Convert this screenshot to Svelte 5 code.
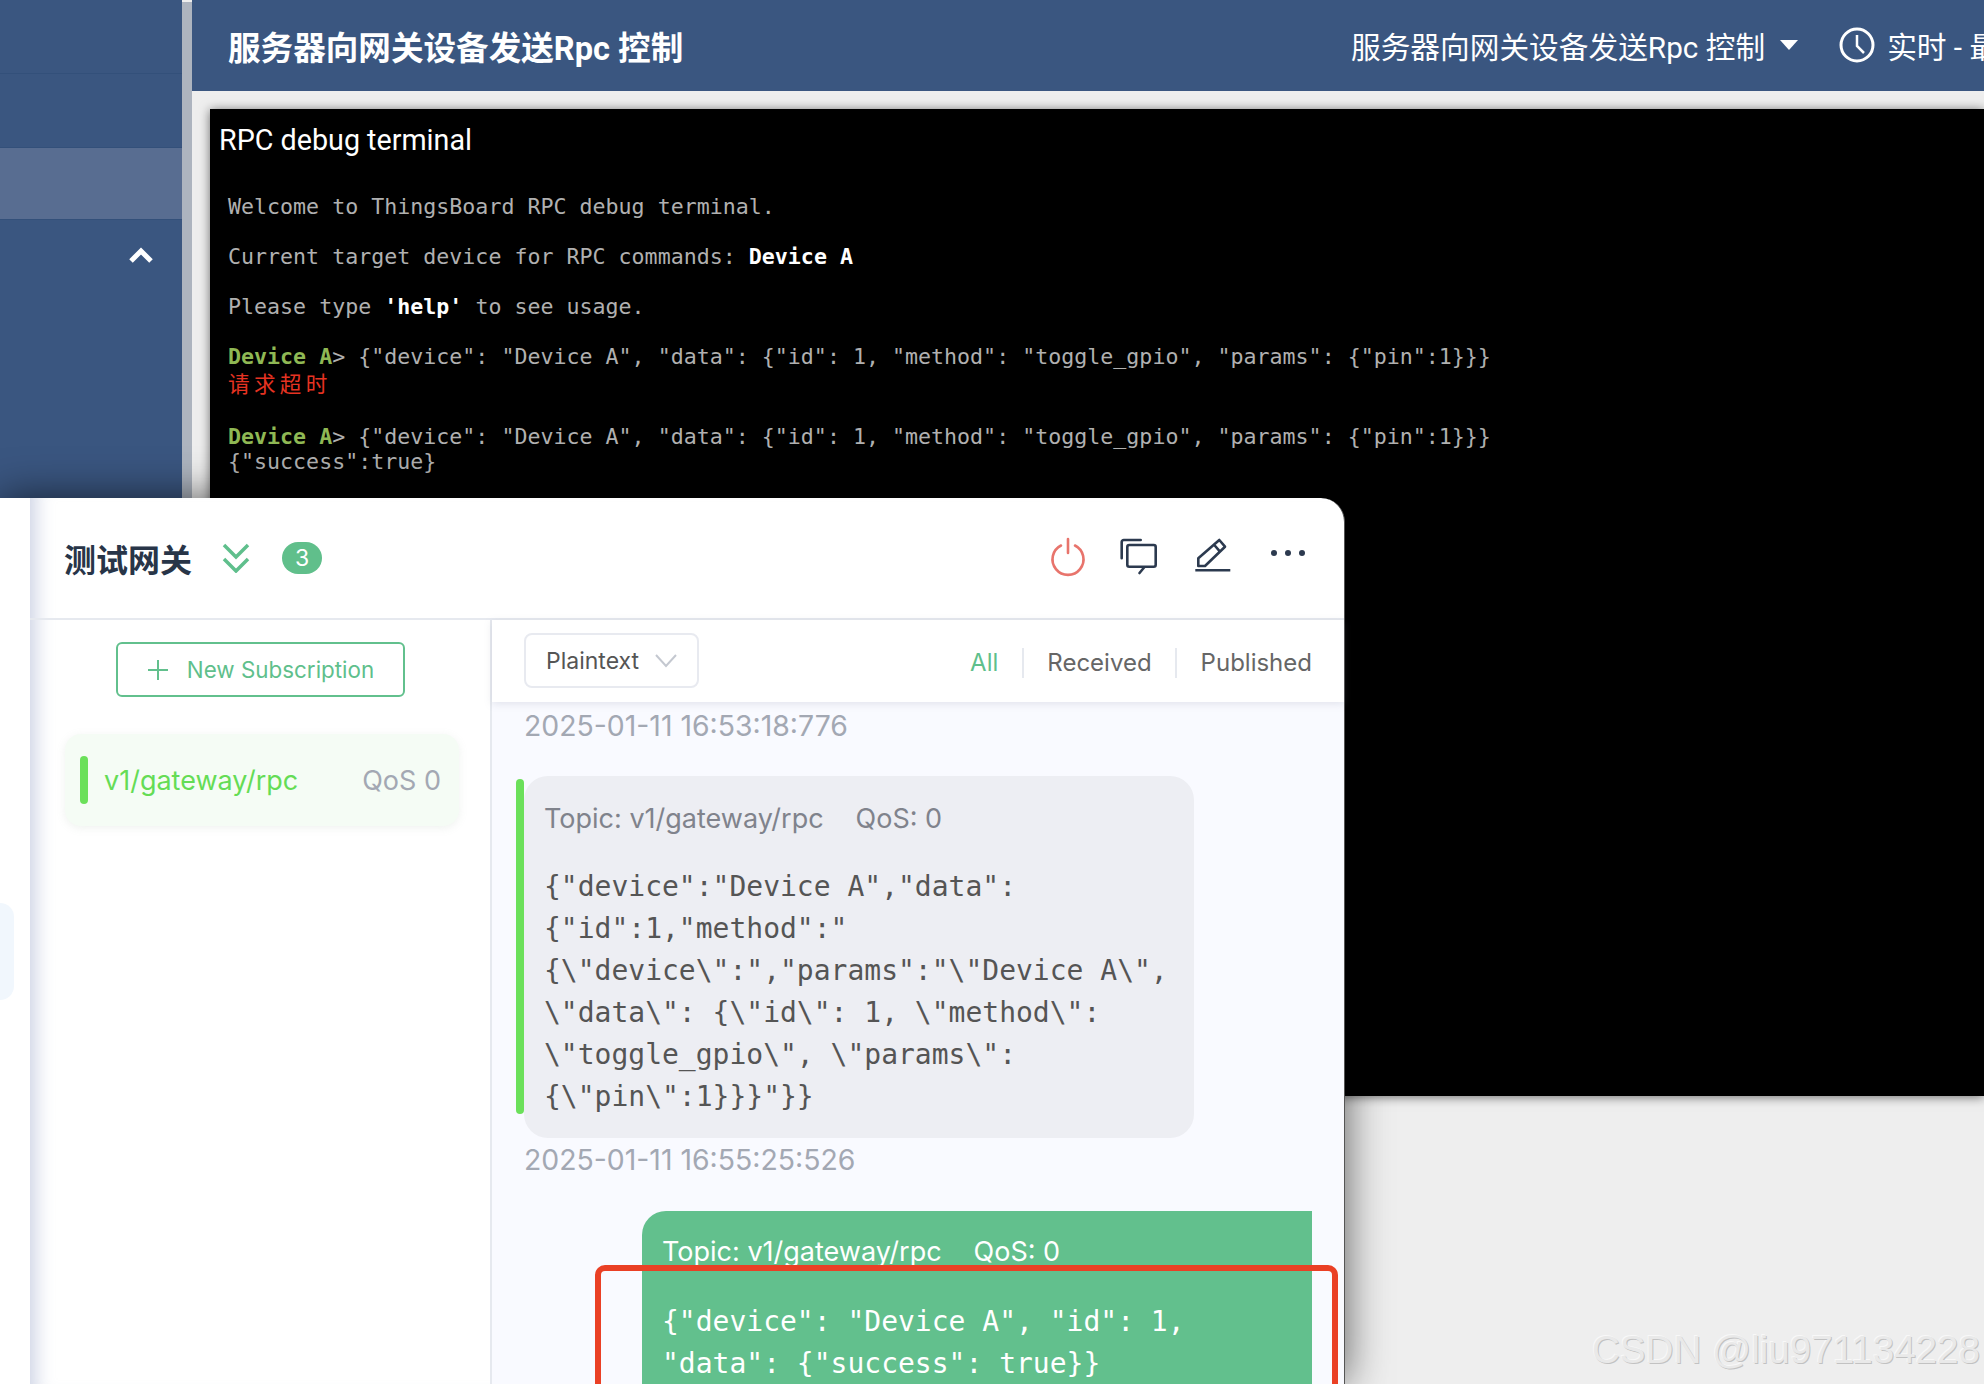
<script lang="ts">
	const terminalIntro = "Welcome to ThingsBoard RPC debug terminal.";
	const command = `{"device": "Device A", "data": {"id": 1, "method": "toggle_gpio", "params": {"pin":1}}}`;

	const received = [
		`{"device":"Device A","data":`,
		`{"id":1,"method":"`,
		`{\\"device\\":","params":"\\"Device A\\",`,
		`\\"data\\": {\\"id\\": 1, \\"method\\":`,
		`\\"toggle_gpio\\", \\"params\\":`,
		`{\\"pin\\":1}}}"}}`,
	];
	const published = [`{"device": "Device A", "id": 1,`, `"data": {"success": true}}`];
	const tabs = ["All", "Received", "Published"];
</script>

<div class="screen">
	<div class="back">
		<aside class="sidebar">
			<div class="nav-row"></div>
			<div class="nav-row"></div>
			<div class="nav-row active"></div>
			<div class="nav-toggle">
				<svg width="26" height="16" viewBox="0 0 26 16">
					<path d="M3 14 L13 4 L23 14" fill="none" stroke="#fff" stroke-width="5" />
				</svg>
			</div>
		</aside>
		<div class="scrollbar"></div>
		<main class="main">
			<header class="topbar">
				<h1>服务器向网关设备发送Rpc 控制</h1>
				<div class="state-select">
					<span>服务器向网关设备发送Rpc 控制</span>
					<i class="caret"></i>
				</div>
				<div class="timewindow">
					<svg width="36" height="36" viewBox="0 0 36 36">
						<circle cx="18" cy="18" r="16" fill="none" stroke="#fff" stroke-width="3" />
						<path d="M18 8 V19 L25 26" fill="none" stroke="#fff" stroke-width="2.5" />
					</svg>
					<span>实时 - 最后</span>
				</div>
			</header>
			<section class="terminal">
				<h2>RPC debug terminal</h2>
				<div class="term-body">
					<p>{terminalIntro}</p>
					<p>Current target device for RPC commands: <b>Device A</b></p>
					<p>Please type <b>'help'</b> to see usage.</p>
					<p class="first-call"><b class="prompt">Device A</b>&gt; {command}<span class="err">请求超时</span></p>
					<p><b class="prompt">Device A</b>&gt; {command}<span class="reply">{`{"success":true}`}</span></p>
				</div>
			</section>
			<div class="below"></div>
		</main>
	</div>

	<div class="client">
		<div class="rail"><div class="rail-tab"></div></div>
		<div class="pane">
			<header class="conn-head">
				<span class="conn-name">测试网关</span>
				<svg class="chev" width="28" height="30" viewBox="0 0 28 30">
					<path d="M2 2 L14 14 L26 2 M2 16 L14 28 L26 16" fill="none" stroke="#5fbf8c" stroke-width="3.5" />
				</svg>
				<span class="badge">3</span>
				<div class="conn-actions">
					<svg width="42" height="42" viewBox="0 0 42 42">
						<path d="M14 9.5 A15.5 15.5 0 1 0 28 9.5 M21 3 V17" fill="none" stroke="#e8746c" stroke-width="2.6" stroke-linecap="round" />
					</svg>
					<svg width="42" height="42" viewBox="0 0 42 42">
						<path d="M21.7 4 H4.7 a2 2 0 0 0 -2 2 V22.3" fill="none" stroke="#2c3a4f" stroke-width="2.6" stroke-linecap="round" />
						<path d="M10.3 9 H34.7 a2 2 0 0 1 2 2 V28.7 a2 2 0 0 1 -2 2 H10.3 a2 2 0 0 1 -2 -2 V11 a2 2 0 0 1 2 -2 Z M25.5 31 L20.5 37" fill="none" stroke="#2c3a4f" stroke-width="2.6" stroke-linecap="round" />
					</svg>
					<svg width="42" height="42" viewBox="0 0 42 42">
						<path d="M7.3 30 V22.3 L28.3 4 L34 10.7 L14 30 Z M23.3 9 L29 15.7" fill="none" stroke="#2c3a4f" stroke-width="2.6" stroke-linejoin="round" />
						<path d="M4.3 34.3 H39.3" fill="none" stroke="#2c3a4f" stroke-width="2.6" />
					</svg>
					<svg class="more" width="42" height="42" viewBox="0 0 42 42">
						<circle cx="7" cy="21" r="3" fill="#2c3a4f" />
						<circle cx="21" cy="21" r="3" fill="#2c3a4f" />
						<circle cx="35" cy="21" r="3" fill="#2c3a4f" />
					</svg>
				</div>
			</header>
			<div class="conn-body">
				<div class="subs">
					<button class="new-sub">
						<svg width="22" height="22" viewBox="0 0 22 22">
							<path d="M11 1 V21 M1 11 H21" fill="none" stroke="#62c08d" stroke-width="2" />
						</svg>
						New Subscription
					</button>
					<div class="sub-item">
						<i class="sub-bar"></i>
						<span class="sub-topic">v1/gateway/rpc</span>
						<span class="sub-qos">QoS 0</span>
					</div>
				</div>
				<div class="msgs">
					<div class="toolbar">
						<div class="format">
							<span>Plaintext</span>
							<svg width="22" height="14" viewBox="0 0 22 14">
								<path d="M1 1 L11 12 L21 1" fill="none" stroke="#c4c8d0" stroke-width="2" />
							</svg>
						</div>
						<div class="tabs">
							{#each tabs as tab, i (tab)}
								<span class:on={i === 0}>{tab}</span>
							{/each}
						</div>
					</div>
					<div class="msg-list">
						<div class="stamp">2025-01-11 16:53:18:776</div>
						<div class="bubble in">
							<div class="meta"><span>Topic: v1/gateway/rpc</span><span>QoS: 0</span></div>
							<div class="code">
								{#each received as line, i (i)}
									<div>{line}</div>
								{/each}
							</div>
						</div>
						<div class="stamp second">2025-01-11 16:55:25:526</div>
						<div class="bubble out">
							<div class="meta"><span>Topic: v1/gateway/rpc</span><span>QoS: 0</span></div>
							<div class="code">
								{#each published as line, i (i)}
									<div>{line}</div>
								{/each}
							</div>
						</div>
					</div>
				</div>
			</div>
		</div>
		<div class="highlight"></div>
	</div>

	<div class="watermark">CSDN @liu971134228</div>
</div>

<style>
	:global(body) {
		margin: 0;
	}

	.screen {
		position: relative;
		width: 1984px;
		height: 1384px;
		overflow: hidden;
		background: #eeeeee;
		font-family: Inter, "Noto Sans CJK SC", sans-serif;
	}

	.back {
		display: flex;
		height: 100%;
	}

	.sidebar {
		width: 182px;
		flex: none;
		background: #3a5680;
	}
	.nav-row {
		height: 73px;
		border-bottom: 1px solid #33507a;
		box-sizing: content-box;
	}
	.nav-row.active {
		background: #586d91;
		height: 71px;
	}
	.nav-toggle {
		display: flex;
		justify-content: flex-end;
		padding: 27px 28px 0 0;
	}

	.scrollbar {
		width: 10px;
		flex: none;
		margin-top: 2px;
		background: #adb4bf;
	}

	.main {
		flex: 1;
		min-width: 0;
		display: flex;
		flex-direction: column;
	}

	.topbar {
		height: 91px;
		flex: none;
		box-sizing: border-box;
		display: flex;
		align-items: center;
		padding: 0 0 1px 36px;
		background: #3a5680;
		color: #fff;
		white-space: nowrap;
		font-family: Roboto, "Noto Sans CJK SC", sans-serif;
		overflow: hidden;
	}
	.topbar h1 {
		margin: 0;
		width: 1123px;
		flex: none;
		font-size: 32.6px;
		font-weight: 700;
	}
	.state-select {
		display: flex;
		align-items: center;
		gap: 15px;
		font-size: 29.7px;
		flex: none;
	}
	.caret {
		border-left: 9px solid transparent;
		border-right: 9px solid transparent;
		border-top: 10px solid #fff;
	}
	.timewindow {
		display: flex;
		align-items: center;
		gap: 12px;
		margin-left: 41px;
		font-size: 29.7px;
		flex: none;
	}

	.terminal {
		margin: 18px 0 0 18px;
		height: 987px;
		flex: none;
		background: #000;
		box-shadow: 0 1px 10px rgba(0, 0, 0, 0.55);
		overflow: hidden;
	}
	.terminal h2 {
		margin: 0;
		padding: 13px 0 0 9px;
		font-family: Roboto, sans-serif;
		font-size: 28.7px;
		font-weight: 400;
		line-height: 36px;
		color: #fff;
	}
	.term-body {
		padding: 36px 0 0 18px;
		font-family: "DejaVu Sans Mono", "Noto Sans CJK SC", monospace;
		font-size: 21.64px;
		line-height: 25px;
		color: #b0b0b0;
	}
	.term-body p {
		margin: 0 0 25px;
		white-space: pre;
	}
	.term-body .first-call {
		margin-bottom: 24px;
	}
	.term-body b {
		color: #fff;
	}
	.term-body .prompt {
		color: #8fb854;
	}
	.err {
		display: block;
		line-height: 31px;
		color: #e63322;
		letter-spacing: 4.3px;
	}
	.reply {
		display: block;
	}

	.client {
		position: absolute;
		left: 0;
		top: 498px;
		width: 1344px;
		height: 886px;
		display: flex;
		background: #fff;
		border-top-right-radius: 24px;
		border-right: 1px solid #555;
		box-shadow: 0 0 44px rgba(0, 0, 0, 0.62);
	}

	.rail {
		width: 30px;
		flex: none;
		position: relative;
		background: #fff;
	}
	.rail-tab {
		position: absolute;
		left: 0;
		top: 405px;
		width: 14px;
		height: 97px;
		background: #f1f7fd;
		border-radius: 0 14px 14px 0;
	}

	.pane {
		flex: 1;
		min-width: 0;
		display: flex;
		flex-direction: column;
		box-shadow: inset 22px 0 18px -16px rgba(190, 198, 220, 0.75);
		border-top-right-radius: 24px;
	}

	.conn-head {
		height: 122px;
		flex: none;
		box-sizing: border-box;
		border-bottom: 2px solid #e6e9ef;
		display: flex;
		align-items: center;
		padding-left: 34px;
	}
	.conn-name {
		font-family: "Noto Sans CJK SC", sans-serif;
		font-size: 32px;
		font-weight: 700;
		color: #283548;
	}
	.chev {
		margin-left: 30px;
	}
	.badge {
		margin-left: 32px;
		width: 40px;
		height: 32px;
		border-radius: 16px;
		background: #60bf8b;
		color: #fff;
		font-size: 23px;
		text-align: center;
		line-height: 32px;
	}
	.conn-actions {
		margin-left: auto;
		margin-right: 35px;
		display: flex;
		gap: 30px;
		transform: translateY(-1px);
	}
	.more {
		margin-left: 4px;
		transform: translateY(-4px);
	}

	.conn-body {
		flex: 1;
		min-height: 0;
		display: flex;
	}

	.subs {
		width: 462px;
		flex: none;
		box-sizing: border-box;
		border-right: 2px solid #e6e9ef;
		padding: 22px 0 0 35px;
	}
	.new-sub {
		display: flex;
		align-items: center;
		justify-content: center;
		gap: 18px;
		margin-left: 51px;
		width: 289px;
		height: 55px;
		box-sizing: border-box;
		padding: 0;
		background: #fff;
		border: 2px solid #62c08d;
		border-radius: 6px;
		color: #5fbf8c;
		font-family: inherit;
		font-size: 22.4px;
	}
	.sub-item {
		margin-top: 37px;
		width: 394px;
		height: 92px;
		box-sizing: border-box;
		padding: 0 18px 0 15px;
		display: flex;
		align-items: center;
		border-radius: 16px;
		background: #f5fcf5;
		box-shadow: 0 2px 8px rgba(150, 170, 150, 0.15);
		font-size: 27px;
	}
	.sub-bar {
		width: 8px;
		height: 48px;
		border-radius: 4px;
		background: #6be05a;
	}
	.sub-topic {
		margin-left: 16px;
		color: #65dc55;
	}
	.sub-qos {
		margin-left: auto;
		color: #a3a8b3;
	}

	.msgs {
		flex: 1;
		min-width: 0;
		display: flex;
		flex-direction: column;
		background: #f9faff;
	}
	.toolbar {
		height: 82px;
		flex: none;
		box-sizing: border-box;
		display: flex;
		align-items: flex-start;
		background: #fff;
		box-shadow: 0 2px 8px rgba(120, 130, 150, 0.18);
		position: relative;
		padding: 13px 32px 0;
	}
	.format {
		width: 175px;
		height: 55px;
		box-sizing: border-box;
		display: flex;
		align-items: center;
		gap: 16px;
		padding-left: 20px;
		border: 2px solid #e8eaf0;
		border-radius: 8px;
		font-size: 23px;
		color: #555;
	}
	.tabs {
		margin-left: auto;
		margin-top: 15px;
		display: flex;
		align-items: center;
		font-size: 24px;
		line-height: 30px;
		color: #666;
	}
	.tabs span {
		padding: 0 23.5px;
		border-left: 2px solid #e6e9ef;
	}
	.tabs span:first-child {
		border-left: 0;
	}
	.tabs span:last-child {
		padding-right: 0;
	}
	.tabs .on {
		color: #5fbf8c;
	}

	.msg-list {
		flex: 1;
		min-height: 0;
		display: flex;
		flex-direction: column;
		align-items: flex-start;
		padding: 7px 32px 0;
		overflow: hidden;
	}
	.stamp {
		font-size: 28.4px;
		line-height: 34px;
		color: #a3a8b3;
	}
	.stamp.second {
		margin-top: 5px;
	}

	.bubble {
		flex: none;
		width: 670px;
		box-sizing: border-box;
		position: relative;
	}
	.bubble.in {
		margin-top: 33px;
		padding: 26px 20px 20px;
		background: #edeef3;
		border-radius: 24px;
		color: #80838c;
	}
	.bubble.in::before {
		content: "";
		position: absolute;
		left: -8px;
		top: 3px;
		bottom: 24px;
		width: 8px;
		border-radius: 4px;
		background: #6be05a;
	}
	.bubble.out {
		margin-top: 34px;
		margin-left: auto;
		padding: 24px 20px 30px;
		background: #62c08d;
		border-radius: 24px 0 24px 24px;
		color: #fff;
	}
	.meta {
		display: flex;
		gap: 32px;
		font-size: 27px;
		line-height: 34px;
	}
	.code {
		margin-top: 30px;
		font-family: "DejaVu Sans Mono", monospace;
		font-size: 28px;
		line-height: 42px;
		white-space: pre;
		color: #555;
	}
	.out .code {
		margin-top: 32px;
		color: #fff;
	}

	.highlight {
		position: absolute;
		left: 595px;
		top: 767px;
		width: 743px;
		height: 220px;
		box-sizing: border-box;
		border: 6px solid #ea4025;
		border-radius: 10px;
	}

	.watermark {
		position: absolute;
		right: 4px;
		top: 1327px;
		font-family: "Liberation Sans", sans-serif;
		font-size: 38.6px;
		line-height: 46px;
		color: #e9e9e9;
		text-shadow: 1px 1px 0 #c2c2c2, -1px -1px 0 #f8f8f8;
	}
</style>
